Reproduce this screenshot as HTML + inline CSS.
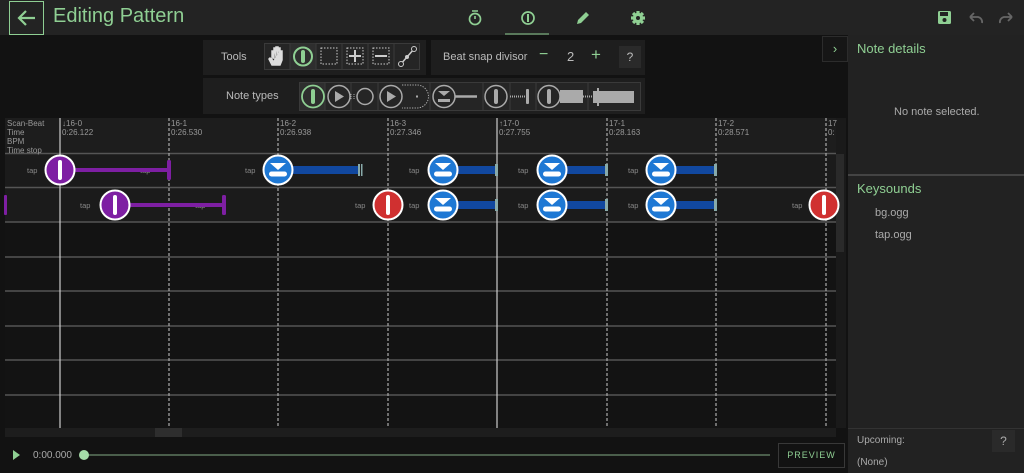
<!DOCTYPE html>
<html><head><meta charset="utf-8"><style>
*{margin:0;padding:0;box-sizing:border-box}
body{width:1024px;height:473px;background:#121212;font-family:"Liberation Sans",sans-serif;position:relative;overflow:hidden;color:#ccc}
.abs{position:absolute}
.top{left:0;top:0;width:1024px;height:35px;background:#232323}
.panel{background:#1e1e1e}
.lbl{font-size:11px;color:#bbb}
</style></head><body>
<div class="abs top"></div>
<div class="abs" style="left:9px;top:1px;width:35px;height:34px;border:1px solid #8fcf93"></div>
<svg class="abs" style="left:9px;top:1px" width="35" height="34"><path d="M26 17H10M17 10l-7 7 7 7" stroke="#8fcf93" stroke-width="2.2" fill="none"/></svg>
<div class="abs" style="left:53px;top:5px;font-size:20px;color:#8fcf93">Editing Pattern</div>
<svg class="abs" style="left:460px;top:0" width="200" height="35">
<circle cx="15" cy="19" r="5.5" stroke="#8fcf93" stroke-width="1.7" fill="none"/><path d="M12 11h6M15 19v-3" stroke="#8fcf93" stroke-width="1.6"/>
<circle cx="68" cy="18" r="6" stroke="#8fcf93" stroke-width="1.7" fill="none"/><path d="M68 14v8" stroke="#8fcf93" stroke-width="2"/>
<path d="M45 34h44" stroke="#8fcf93" stroke-width="1"/>
<path d="M117 24l1-4 8-8 3 3-8 8z" fill="#8fcf93"/>
<g fill="#8fcf93" transform="translate(178 18)">
<rect x="-1.6" y="-7" width="3.2" height="14"/><rect x="-1.6" y="-7" width="3.2" height="14" transform="rotate(45)"/><rect x="-1.6" y="-7" width="3.2" height="14" transform="rotate(90)"/><rect x="-1.6" y="-7" width="3.2" height="14" transform="rotate(135)"/>
<circle r="5.2"/><circle r="2" fill="#232323"/></g>
</svg>
<svg class="abs" style="left:930px;top:6px" width="90" height="24">
<rect x="8" y="5" width="13" height="13" rx="1.5" fill="#8fcf93"/><rect x="10" y="6" width="8" height="4" fill="#232323"/><circle cx="14.5" cy="14" r="2" fill="#232323"/>
<path d="M40 11h8a5 5 0 0 1 4 6M40 11l4-4M40 11l4 4" stroke="#666" stroke-width="1.8" fill="none"/>
<path d="M82 11h-8a5 5 0 0 0-4 6M82 11l-4-4M82 11l-4 4" stroke="#666" stroke-width="1.8" fill="none"/>
</svg>

<div class="abs panel" style="left:203px;top:40px;width:223px;height:35px"></div>
<div class="abs lbl" style="left:221px;top:51px">Tools</div>
<div class="abs panel" style="left:431px;top:40px;width:214px;height:35px"></div>
<div class="abs lbl" style="left:443px;top:51px">Beat snap divisor</div>
<div class="abs" style="left:539px;top:46px;font-size:16px;color:#8fcf93">−</div>
<div class="abs" style="left:567px;top:49px;font-size:13px;color:#bbb">2</div>
<div class="abs" style="left:591px;top:45px;font-size:17px;color:#8fcf93">+</div>
<div class="abs" style="left:619px;top:46px;width:22px;height:22px;background:#2a2a2a;color:#bbb;font-size:12px;text-align:center;line-height:22px">?</div>
<div class="abs panel" style="left:203px;top:78px;width:442px;height:36px"></div>
<div class="abs lbl" style="left:226px;top:90px">Note types</div>

<svg class="abs" style="left:264px;top:43px" width="160" height="28">
<rect x="0.5" y="0.5" width="155" height="26" fill="#252525" stroke="#3a3a3a"/>
<rect x="26" y="0.5" width="26" height="26" fill="#2e2e2e"/>
<path d="M26 0v27M52 0v27M78 0v27M104 0v27M130 0v27" stroke="#3a3a3a"/>
<path d="M8 22v-8M8 14v-6h2v8M10 8v-3h2v11M12 5v-1h2v12M14 5h2v11M16 8h2v9l-2 5h-8l-3-6 1-1 3 3" stroke="#ddd" stroke-width="1.5" fill="#ddd"/>
<circle cx="39" cy="13.5" r="9" stroke="#8fcf93" stroke-width="2" fill="none"/><rect x="37" y="7" width="4" height="13" rx="2" fill="#8fcf93"/>
<rect x="57" y="5" width="16" height="16" stroke="#ccc" stroke-dasharray="1.5 1.5" fill="none"/>
<rect x="83" y="5" width="16" height="16" stroke="#ccc" stroke-dasharray="1.5 1.5" fill="none"/><path d="M85 13h12M91 7v12" stroke="#ccc" stroke-width="2"/>
<rect x="109" y="5" width="16" height="16" stroke="#ccc" stroke-dasharray="1.5 1.5" fill="none"/><path d="M111 13h12" stroke="#ccc" stroke-width="2"/>
<path d="M136 22l14-16" stroke="#ccc" stroke-width="1.5"/><circle cx="137" cy="21" r="2.5" fill="#252525" stroke="#ccc"/><circle cx="143" cy="14" r="2" fill="#ccc"/><circle cx="150" cy="6" r="2.5" fill="#252525" stroke="#ccc"/>
</svg>

<svg class="abs" style="left:299px;top:82px" width="342" height="30">
<rect x="0.5" y="0.5" width="341" height="28" fill="#252525" stroke="#3a3a3a"/>
<rect x="1" y="1" width="25" height="27" fill="#2e2e2e"/>
<path d="M26 0v29M52 0v29M79 0v29M131 0v29M184 0v29M211 0v29M237 0v29M289 0v29" stroke="#3a3a3a"/>
<circle cx="14" cy="14.5" r="11" stroke="#8fcf93" stroke-width="1.8" fill="none"/><rect x="12" y="7" width="4" height="15" rx="2" fill="#8fcf93"/>
<circle cx="40" cy="14.5" r="11" stroke="#aaa" stroke-width="1.5" fill="none"/><path d="M36 9l9 5.5-9 5.5z" fill="#aaa"/>
<path d="M52 12v5M55 12v5" stroke="#aaa" stroke-dasharray="1 1"/><circle cx="66" cy="14.5" r="8" stroke="#aaa" stroke-width="1.5" fill="none"/>
<circle cx="92" cy="14.5" r="11" stroke="#aaa" stroke-width="1.5" fill="none"/><path d="M88 9l9 5.5-9 5.5z" fill="#aaa"/>
<path d="M103 3h15a11.5 11.5 0 0 1 0 23h-15" stroke="#aaa" stroke-dasharray="1.3 1.3" fill="none"/><rect x="117" y="13.5" width="2" height="2" fill="#aaa"/>
<circle cx="145" cy="14.5" r="11" stroke="#aaa" stroke-width="1.5" fill="none"/><path d="M139 9h12l-6 5z M139 17h12v3h-12z" fill="#aaa"/><path d="M156 14.5h22" stroke="#aaa" stroke-width="2.5"/>
<circle cx="197" cy="14.5" r="11" stroke="#aaa" stroke-width="1.5" fill="none"/><rect x="195" y="7" width="4" height="15" rx="2" fill="#aaa"/>
<path d="M211 14.5h17" stroke="#aaa" stroke-width="2" stroke-dasharray="1 1"/><rect x="227" y="7" width="3" height="15" rx="1" fill="#aaa"/>
<circle cx="250" cy="14.5" r="11" stroke="#aaa" stroke-width="1.5" fill="none"/><rect x="248" y="7" width="4" height="15" rx="2" fill="#aaa"/><rect x="261" y="8" width="23" height="13" fill="#aaa"/>
<path d="M284 14.5h10" stroke="#aaa" stroke-width="2" stroke-dasharray="1 1"/><path d="M294 9h4v-3h2v3h35v12h-35v3h-2v-3h-4z" fill="#aaa"/>
</svg>

<!-- timeline -->
<svg class="abs" style="left:0;top:118px" width="848" height="320">
<rect x="5" y="0" width="831" height="35" fill="#1d1d1d"/>
<rect x="5" y="35" width="831" height="69" fill="#1b1b1b"/>
<rect x="5" y="104" width="831" height="206" fill="#131313"/>
<rect x="836" y="0" width="10" height="310" fill="#1a1a1a"/><rect x="836" y="36" width="8" height="98" fill="#2a2a2a"/>
<g stroke="#555" stroke-width="1.5"><path d="M5 35.5h831M5 69.5h831M5 104h831M5 139h831M5 173h831M5 208h831M5 242h831M5 277h831"/></g>
<g stroke="#ccc" stroke-width="1.2"><path d="M60 0v310M497 0v310"/></g>
<g stroke="#aaa" stroke-width="1.2" stroke-dasharray="3 2"><path d="M169 0v310M278 0v310M388 0v310M607 0v310M716 0v310M826 0v310"/></g>
<g font-size="8" fill="#999" font-family="Liberation Sans"><text x="7" y="8">Scan-Beat</text><text x="7" y="17">Time</text><text x="7" y="26">BPM</text><text x="7" y="35">Time stop</text>
<text x="62" y="8">↓16-0</text><text x="62" y="17">0:26.122</text>
<text x="171" y="8">16-1</text><text x="171" y="17">0:26.530</text>
<text x="280" y="8">16-2</text><text x="280" y="17">0:26.938</text>
<text x="390" y="8">16-3</text><text x="390" y="17">0:27.346</text>
<text x="499" y="8">↑17-0</text><text x="499" y="17">0:27.755</text>
<text x="609" y="8">17-1</text><text x="609" y="17">0:28.163</text>
<text x="718" y="8">17-2</text><text x="718" y="17">0:28.571</text>
<text x="828" y="8">17</text><text x="828" y="17">0:</text></g>
<g font-size="7.5" fill="#888"><text x="27" y="55">tap</text><text x="140" y="55">tap</text><text x="245" y="55">tap</text><text x="409" y="55">tap</text><text x="518" y="55">tap</text><text x="628" y="55">tap</text>
<text x="80" y="90">tap</text><text x="195" y="90">tap</text><text x="355" y="90">tap</text><text x="409" y="90">tap</text><text x="518" y="90">tap</text><text x="628" y="90">tap</text><text x="792" y="90">tap</text></g>
<g fill="#7e1fa3"><rect x="70" y="50" width="99" height="4"/><rect x="167" y="42" width="4" height="20" rx="1.5"/>
<rect x="125" y="85" width="99" height="4"/><rect x="222" y="77" width="4" height="20" rx="1.5"/><rect x="4" y="77" width="3" height="20" rx="1"/></g>
<circle cx="60" cy="52" r="14.5" fill="#7e1fa3" stroke="#fff" stroke-width="2"/><rect x="58" y="42" width="4" height="20" rx="2" fill="#fff"/>
<circle cx="115" cy="87" r="14.5" fill="#7e1fa3" stroke="#fff" stroke-width="2"/><rect x="113" y="77" width="4" height="20" rx="2" fill="#fff"/>
<circle cx="388" cy="87" r="14.5" fill="#d03030" stroke="#fff" stroke-width="2"/><rect x="386" y="77" width="4" height="20" rx="2" fill="#fff"/>
<circle cx="824" cy="87" r="14.5" fill="#d03030" stroke="#fff" stroke-width="2"/><rect x="822" y="77" width="4" height="20" rx="2" fill="#fff"/>
<g fill="#1148a0"><rect x="290" y="48" width="70" height="8"/><rect x="455" y="48" width="42" height="8"/><rect x="564" y="48" width="43" height="8"/><rect x="673" y="48" width="43" height="8"/>
<rect x="455" y="83" width="42" height="8"/><rect x="564" y="83" width="43" height="8"/><rect x="673" y="83" width="43" height="8"/></g>
<g fill="#8aa" ><rect x="358" y="46" width="2" height="12"/><rect x="361" y="46" width="1.5" height="12"/><rect x="495" y="46" width="3" height="12"/><rect x="605" y="46" width="3" height="12"/><rect x="714" y="46" width="3" height="12"/><rect x="495" y="81" width="3" height="12"/><rect x="605" y="81" width="3" height="12"/><rect x="714" y="81" width="3" height="12"/></g>
<defs><g id="b"><circle r="14.5" fill="#1e78d4" stroke="#fff" stroke-width="2"/><path d="M-8-7h16l-8 7z" fill="#fff"/><rect x="-9" y="1.5" width="18" height="5" rx="2.5" fill="#fff"/></g></defs>
<use href="#b" x="278" y="52"/><use href="#b" x="443" y="52"/><use href="#b" x="552" y="52"/><use href="#b" x="661" y="52"/>
<use href="#b" x="443" y="87"/><use href="#b" x="552" y="87"/><use href="#b" x="661" y="87"/>
<rect x="5" y="310" width="831" height="9" fill="#1d1d1d"/><rect x="155" y="310" width="27" height="9" fill="#2e2e2e"/>
</svg>
<div class="abs" style="left:822px;top:36px;width:26px;height:26px;background:#161616;border:1px solid #2c2c2c;color:#8fcf93;font-size:13px;text-align:center;line-height:23px">›</div>

<svg class="abs" style="left:0;top:445px" width="780" height="20"><path d="M13 5l7 5-7 5z" fill="#8fcf93"/><path d="M84 10h686" stroke="#4a5e4b" stroke-width="2"/><circle cx="84" cy="10" r="5" fill="#a6dca9"/></svg>
<div class="abs" style="left:33px;top:450px;font-size:10px;color:#aaa">0:00.000</div>
<div class="abs" style="left:778px;top:443px;width:67px;height:25px;border:1px solid #383838;color:#8fcf93;font-size:9px;letter-spacing:1px;text-align:center;line-height:23px">PREVIEW</div>

<div class="abs" style="left:848px;top:35px;width:176px;height:438px;background:#222"></div>
<div class="abs" style="left:857px;top:41px;font-size:13px;color:#8fcf93">Note details</div>
<div class="abs" style="left:894px;top:106px;font-size:11px;color:#aaa">No note selected.</div>
<div class="abs" style="left:848px;top:174px;width:176px;height:2px;background:#444"></div>
<div class="abs" style="left:857px;top:181px;font-size:13px;color:#8fcf93">Keysounds</div>
<div class="abs" style="left:875px;top:207px;font-size:11px;color:#aaa">bg.ogg</div>
<div class="abs" style="left:875px;top:229px;font-size:11px;color:#aaa">tap.ogg</div>
<div class="abs" style="left:848px;top:428px;width:176px;height:1px;background:#333"></div>
<div class="abs" style="left:857px;top:435px;font-size:10px;color:#aaa">Upcoming:</div>
<div class="abs" style="left:992px;top:430px;width:23px;height:22px;background:#2a2a2a;color:#aaa;font-size:12px;text-align:center;line-height:22px">?</div>
<div class="abs" style="left:857px;top:457px;font-size:10px;color:#aaa">(None)</div>
</body></html>
